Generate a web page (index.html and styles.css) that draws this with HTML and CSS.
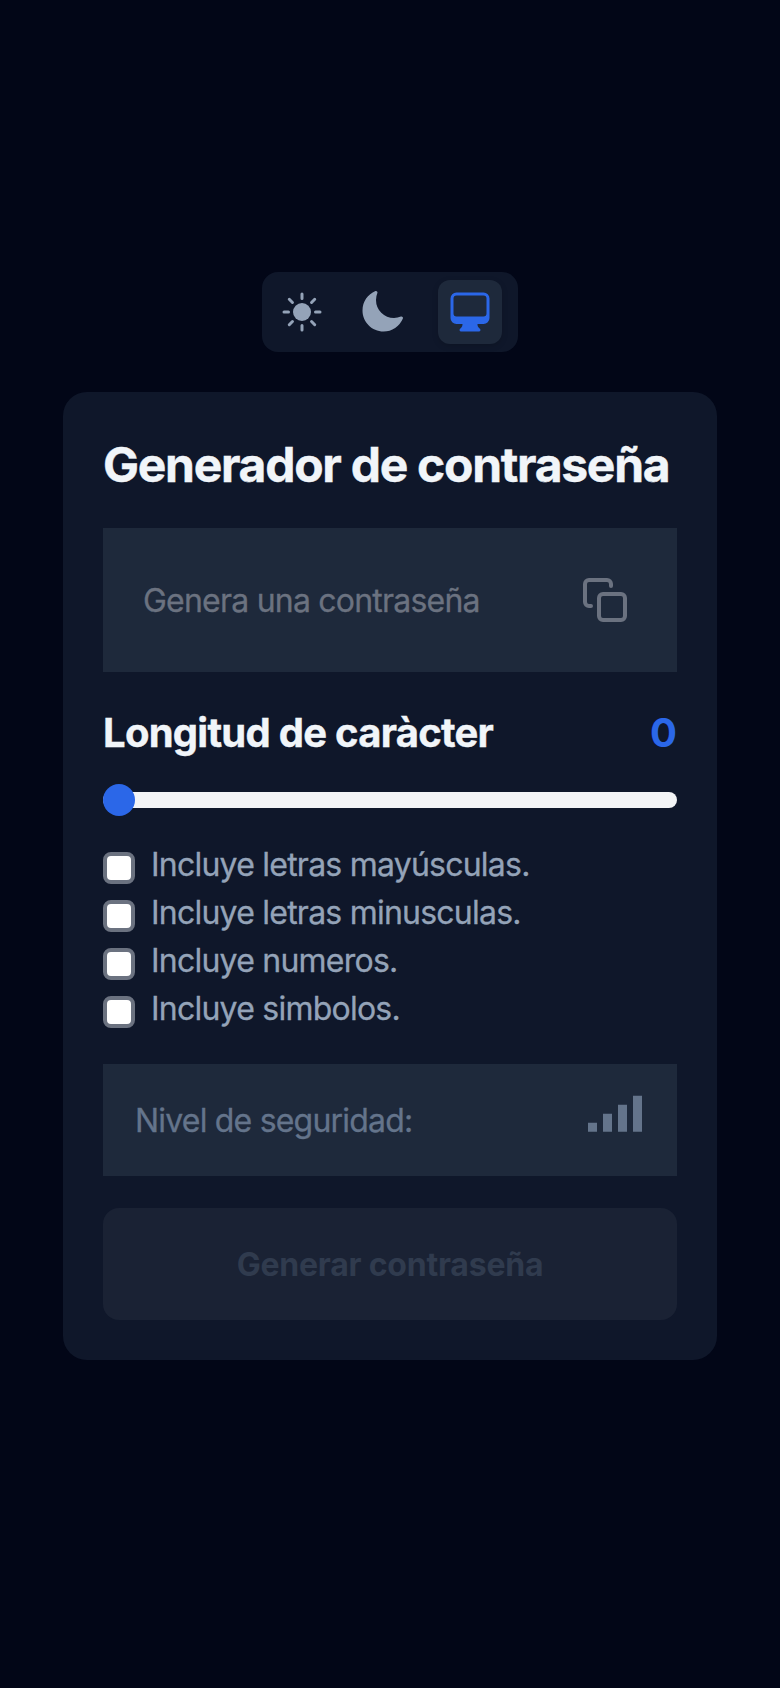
FILE: index.html
```html
<!DOCTYPE html>
<html lang="es">
<head>
<meta charset="utf-8">
<title>Generador de contraseña</title>
<link rel="stylesheet" href="styles.css">
</head>
<body>
<main class="page">
  <nav class="themes">
    <button class="theme" aria-label="Claro">
      <svg class="icon" viewBox="0 0 24 24" fill="none" stroke="currentColor" stroke-width="1.5" stroke-linecap="round"><circle cx="12" cy="12" r="4.5" fill="currentColor" stroke="none"/><path d="M12 3v2.25M12 18.75V21M3 12h2.25M18.75 12H21M5.636 5.636l1.591 1.591M16.773 16.773l1.591 1.591M5.636 18.364l1.591-1.591M16.773 7.227l1.591-1.591"/></svg>
    </button>
    <button class="theme theme-dark" aria-label="Oscuro">
      <svg class="icon" viewBox="0 0 24 24" fill="currentColor"><path d="M9.528 1.718a.75.75 0 0 1 .162.819A8.97 8.97 0 0 0 9 6a9 9 0 0 0 9 9 8.97 8.97 0 0 0 3.463-.69.75.75 0 0 1 .981.98 10.503 10.503 0 0 1-9.694 6.46c-5.799 0-10.5-4.7-10.5-10.5 0-4.368 2.667-8.112 6.46-9.694a.75.75 0 0 1 .818.162Z"/></svg>
    </button>
    <button class="theme theme-active" aria-label="Sistema">
      <svg class="icon" viewBox="0 0 24 24" fill="currentColor" fill-rule="evenodd"><path d="M2.25 5.25a3 3 0 0 1 3-3h13.5a3 3 0 0 1 3 3V15a3 3 0 0 1-3 3h-3v.257c0 .597.237 1.17.659 1.591l.621.622a.75.75 0 0 1-.53 1.28h-9a.75.75 0 0 1-.53-1.28l.621-.622a2.25 2.25 0 0 0 .659-1.59V18h-3a3 3 0 0 1-3-3V5.25Zm1.5 0v7.5a1.5 1.5 0 0 0 1.5 1.5h13.5a1.5 1.5 0 0 0 1.5-1.5v-7.5a1.5 1.5 0 0 0-1.5-1.5H5.25a1.5 1.5 0 0 0-1.5 1.5Z"/></svg>
    </button>
  </nav>
  <section class="card">
    <h1 class="title">Generador de contraseña</h1>
    <div class="field">
      <span class="placeholder">Genera una contraseña</span>
      <svg class="icon copy" viewBox="0 0 24 24" fill="none" stroke="currentColor" stroke-width="2" stroke-linecap="round" stroke-linejoin="round"><rect x="9" y="9" width="13" height="13" rx="2"/><path d="M5 15H4a2 2 0 0 1-2-2V4a2 2 0 0 1 2-2h9a2 2 0 0 1 2 2v1"/></svg>
    </div>
    <div class="length">
      <h2 class="subtitle">Longitud de caràcter</h2>
      <span class="count">0</span>
    </div>
    <div class="slider"><span class="thumb"></span></div>
    <div class="options">
      <label class="option"><span class="box"></span><span class="label">Incluye letras mayúsculas.</span></label>
      <label class="option"><span class="box"></span><span class="label">Incluye letras minusculas.</span></label>
      <label class="option"><span class="box"></span><span class="label">Incluye numeros.</span></label>
      <label class="option"><span class="box"></span><span class="label">Incluye simbolos.</span></label>
    </div>
    <div class="level">
      <span class="level-text">Nivel de seguridad:</span>
      <svg class="bars" viewBox="0 0 54 38" fill="currentColor"><path d="M0 28.75h9v9H0zM15 19.75h9v18h-9zM30 10.75h9v27h-9zM45 1.75h9v36h-9z"/></svg>
    </div>
    <button class="generate">Generar contraseña</button>
  </section>
</main>
</body>
</html>
```
FILE: styles.css
```css
* { box-sizing: border-box; }
body {
  margin: 0;
  background: #020617;
  color: #f1f5f9;
  font-family: Inter, "Liberation Sans", sans-serif;
  font-size: 32px;
  line-height: 48px;
}
.page {
  min-height: 1688px;
  padding: 272px 63px 0;
  display: flex;
  flex-direction: column;
  align-items: center;
}
.themes {
  display: flex;
  width: 256px;
  height: 80px;
  padding: 8px;
  border-radius: 16px;
  background: #0f172a;
}
.theme {
  width: 64px;
  height: 64px;
  padding: 8px;
  border: 0;
  border-radius: 12px;
  background: none;
  color: #94a3b8;
}
.theme-dark { margin: 0 24px 0 16px; }
.theme-active {
  background: #1e293b;
  color: #2b67e8;
  box-shadow: 0 2px 6px rgb(0 0 0 / 0.15);
}
.icon { display: block; width: 48px; height: 48px; }
.card {
  width: 654px;
  height: 968px;
  margin-top: 40px;
  padding: 40px;
  border-radius: 24px;
  background: #0f172a;
}
.title {
  margin: 0;
  height: 64px;
  padding-top: 1px;
  font-size: 48px;
  font-weight: 700;
  line-height: 64px;
  letter-spacing: -1.28px;
  white-space: nowrap;
  -webkit-text-stroke: 0.4px currentColor;
}
.field {
  display: flex;
  align-items: center;
  justify-content: space-between;
  height: 144px;
  margin-top: 32px;
  padding: 0 48px 0 40px;
  background: #1e293b;
  color: #6b7280;
}
.placeholder { padding-top: 2px; letter-spacing: -0.78px; }
.placeholder, .label, .level-text { -webkit-text-stroke: 0.3px currentColor; }
.length {
  display: flex;
  justify-content: space-between;
  height: 56px;
  margin-top: 32px;
  padding-top: 1px;
  font-size: 40px;
  font-weight: 700;
  line-height: 56px;
}
.subtitle {
  margin: 0;
  font-size: 40px;
  letter-spacing: -0.74px;
  -webkit-text-stroke: 0.4px currentColor;
}
.count { color: #2b67e8; }
.slider {
  display: flex;
  align-items: center;
  height: 16px;
  margin-top: 32px;
  border-radius: 8px;
  background: #f3f4f6;
}
.thumb {
  width: 32px;
  height: 32px;
  border-radius: 50%;
  background: #2b67e8;
}
.options { margin-top: 32px; color: #94a3b8; }
.option { display: flex; align-items: center; height: 48px; gap: 16px; }
.label { padding-top: 2px; letter-spacing: -0.77px; }
.box {
  width: 32px;
  height: 32px;
  margin-top: 8px;
  border: 4px solid #6b7280;
  border-radius: 8px;
  background: #fff;
}
.level {
  display: flex;
  justify-content: space-between;
  height: 112px;
  margin-top: 32px;
  padding: 30px 35px 0 32px;
  background: #1e293b;
  color: #64748b;
}
.level-text { padding-top: 3px; letter-spacing: -0.8px; }
.bars { width: 54px; height: 38px; }
.generate {
  display: block;
  width: 100%;
  height: 112px;
  margin-top: 32px;
  padding: 2px 0 0;
  border: 0;
  border-radius: 16px;
  background: #1a2234;
  color: #303b4e;
  font: 700 32px/48px Inter, "Liberation Sans", sans-serif;
  letter-spacing: -0.22px;
}
```
